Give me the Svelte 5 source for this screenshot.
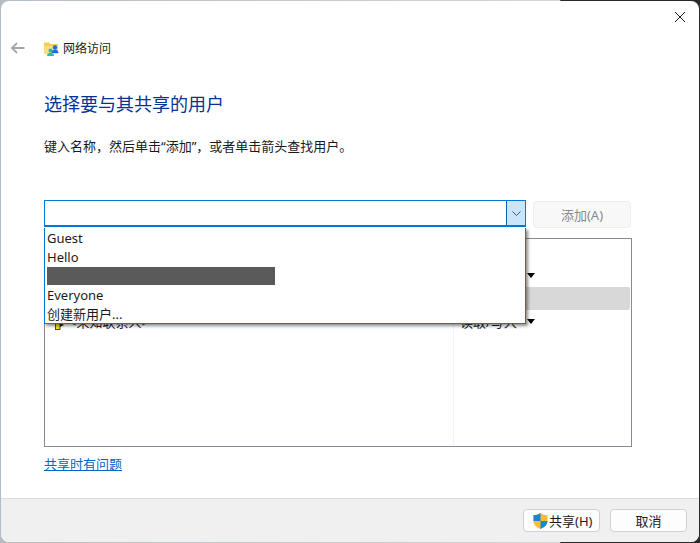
<script>
  const users = ['Guest', 'Hello', null, 'Everyone', '创建新用户...'];
  const rows = [
    { name: '', level: '' },
    { name: '', level: '', menu: true },
    { name: '', level: '', selected: true },
    { name: '<未知联系人>', level: '读取/写入', menu: true, icon: true }
  ];
</script>

<div class="desktop">
  <div class="window">
    <button class="close" aria-label="关闭">
      <svg width="12" height="12" viewBox="0 0 12 12"><path d="M1 1l10 10M11 1L1 11" stroke="#1a1a1a" stroke-width="1" fill="none"/></svg>
    </button>
    <main class="content">
      <div class="nav">
        <svg class="back" width="16" height="12" viewBox="0 0 16 12"><path d="M14.5 6H2M7 1L2 6l5 5" stroke="#a6a6a6" stroke-width="1.8" fill="none"/></svg>
        <svg class="folder" width="15" height="15" viewBox="0 0 15 15">
          <path d="M0 2.5a1 1 0 0 1 1-1h4l1.5 1.5H13a1 1 0 0 1 1 1V12a1 1 0 0 1-1 1H1a1 1 0 0 1-1-1z" fill="#f6c95d"/>
          <path d="M0 5h14v7a1 1 0 0 1-1 1H1a1 1 0 0 1-1-1z" fill="#fbdc84"/>
          <circle cx="11" cy="6.500" r="2.200" fill="#1a73c9"/>
          <path d="M7.500 12c0-2 1.500-3.200 3.500-3.200s3.500 1.200 3.500 3.200z" fill="#1a73c9"/>
          <circle cx="6.500" cy="9.500" r="2" fill="#29b8b0"/>
          <path d="M3 15c0-2 1.500-3.200 3.500-3.200S10 13 10 15z" fill="#29b8b0"/>
        </svg>
        <span class="nav-title">网络访问</span>
      </div>
      <h1>选择要与其共享的用户</h1>
      <p class="hint">键入名称，然后单击“添加”，或者单击箭头查找用户。</p>

      <div class="picker">
        <div class="combo-wrap">
          <div class="combo">
            <div class="combo-input"></div>
            <div class="combo-arrow">
              <svg width="9" height="5" viewBox="0 0 9 5"><path d="M.5.5l4 4 4-4" stroke="#3c5a73" fill="none"/></svg>
            </div>
          </div>
          <ul class="dropdown">
            {#each users as user}
              <li>{#if user}{user}{:else}<span class="redacted"></span>{/if}</li>
            {/each}
          </ul>
        </div>
        <button class="add" disabled>添加(A)</button>
      </div>

      <div class="table">
        {#each rows as row}
          <div class="row" class:selected={row.selected}>
            <div class="name">
              {#if row.icon}
                <svg width="11" height="16" viewBox="0 0 11 16"><rect x="1.500" y="9.500" width="4.500" height="6" fill="#f7e11b" stroke="#222" stroke-width=".8"/><path d="M6 9l4 2-4 2z" fill="#222"/></svg>
              {/if}
              <span>{row.name}</span>
            </div>
            <div class="level">
              <span>{row.level}</span>
              {#if row.menu}<i class="caret"></i>{/if}
            </div>
          </div>
        {/each}
      </div>

      <a class="help" href="#help">共享时有问题</a>
    </main>
    <footer>
      <button class="btn share">
        <svg width="15" height="16" viewBox="0 0 15 16">
          <path d="M7.500 0C5.500 1.500 3 2.200.5 2.300V8c0 3.500 3 6.500 7 8 4-1.500 7-4.500 7-8V2.300C12 2.200 9.500 1.500 7.500 0z" fill="#f6c02c"/>
          <path d="M7.500 0C5.500 1.500 3 2.200.5 2.300V8h7zM7.500 8v8c4-1.500 7-4.500 7-8z" fill="#1c84d8"/>
        </svg>
        共享(H)
      </button>
      <button class="btn">取消</button>
    </footer>
  </div>
</div>

<style>
  :global(body) { margin: 0; }
  .desktop {
    width: 700px;
    height: 543px;
    overflow: hidden;
    box-sizing: border-box;
    padding: 1px 1px 1px 1px;
    background: linear-gradient(90deg, #b4bcc4 0, #d6d6d2 80%, #2a2a2a 80.1%, #2a2a2a 100%);
    font-family: "Noto Sans", "Noto Sans CJK SC", sans-serif;
    font-size: 13px;
    color: #1a1a1a;
  }
  .window {
    position: relative;
    height: 100%;
    background: #fff;
    border-radius: 8px;
    overflow: hidden;
    display: flex;
    flex-direction: column;
  }
  .close {
    position: absolute;
    top: 9px;
    right: 12px;
    width: 14px;
    height: 14px;
    padding: 0;
    border: 0;
    background: none;
    display: flex;
    align-items: center;
    justify-content: center;
  }
  .content {
    flex: 1;
    padding: 37px 67px 0 43px;
    min-height: 0;
  }
  .nav {
    display: flex;
    align-items: center;
    height: 20px;
    margin-left: -34px;
  }
  .back { margin-right: 18px; }
  .folder { margin-right: 4px; }
  .nav-title { font-size: 12px; }
  h1 {
    margin: 32px 0 0;
    font-size: 18px;
    font-weight: 400;
    line-height: 28px;
    color: #003399;
  }
  .hint {
    margin: 19px 0 0;
    font-size: 13px;
    line-height: 18px;
  }
  .picker {
    display: flex;
    margin-top: 45px;
    gap: 7px;
    margin-right: 1px;
  }
  .combo-wrap {
    position: relative;
    width: 482px;
    flex: none;
  }
  .combo {
    display: flex;
    height: 27px;
    box-sizing: border-box;
    border: 1px solid #0078d4;
    border-bottom-width: 2px;
  }
  .combo-input { flex: 1; }
  .combo-arrow {
    width: 18px;
    border-left: 1px solid #0067b8;
    background: #cce4f7;
    display: flex;
    align-items: center;
    justify-content: center;
  }
  .dropdown {
    position: absolute;
    z-index: 2;
    top: 100%;
    left: 0;
    right: 0;
    margin: 0;
    padding: 1px 2px 0;
    list-style: none;
    height: 96px;
    box-sizing: border-box;
    background: #fff;
    border: 1px solid #0078d4;
    border-top: 0;
    box-shadow: 2px 2px 3px rgba(0, 0, 0, .45);
  }
  .dropdown li {
    height: 19px;
    line-height: 19px;
    font-size: 13px;
    white-space: nowrap;
  }
  .redacted {
    display: block;
    width: 228px;
    height: 18px;
    background: #5a5a5a;
  }
  .add {
    width: 98px;
    height: 27px;
    margin-top: 1px;
    padding: 0;
    font: inherit;
    color: #8a8a8a;
    background: #f8f8f8;
    border: 1px solid #eeeeee;
    border-radius: 4px;
  }
  .table {
    position: relative;
    margin-top: 10px;
    height: 209px;
    box-sizing: border-box;
    padding: 2px 1px 0 0;
    border: 1px solid #868a94;
  }
  .row {
    display: grid;
    grid-template-columns: 408px 1fr;
    height: 23px;
    align-items: center;
    border-radius: 2px;
  }
  .row.selected { background: #d8d8d8; }
  .name {
    display: flex;
    align-items: center;
    gap: 4px;
    padding-left: 9px;
  }
  .level {
    position: relative;
    padding-left: 7px;
    height: 100%;
    display: flex;
    align-items: center;
    box-sizing: border-box;
  }
  .caret {
    position: absolute;
    left: 74px;
    top: 9px;
    border: 4px solid transparent;
    border-top: 5px solid #000;
    border-bottom: 0;
  }
  .table::after {
    content: "";
    position: absolute;
    top: 0;
    bottom: 0;
    left: 408px;
    width: 1px;
    background: #eef3f8;
  }
  .help {
    display: inline-block;
    margin-top: 8px;
    color: #0066cc;
    text-decoration: underline;
    line-height: 18px;
  }
  footer {
    flex: none;
    height: 44px;
    box-sizing: border-box;
    border-top: 1px solid #dcdcdc;
    background: #f0f0f0;
    display: flex;
    justify-content: flex-end;
    align-items: flex-start;
    gap: 10px;
    padding: 10px 12px 0 0;
  }
  .btn {
    width: 77px;
    height: 23px;
    padding: 0;
    font: inherit;
    color: #1a1a1a;
    background: #fdfdfd;
    border: 1px solid #d0d0d0;
    border-radius: 4px;
    display: flex;
    align-items: center;
    justify-content: center;
    gap: 1px;
  }
  .btn.share {
    justify-content: flex-start;
    padding-left: 9px;
  }
</style>
